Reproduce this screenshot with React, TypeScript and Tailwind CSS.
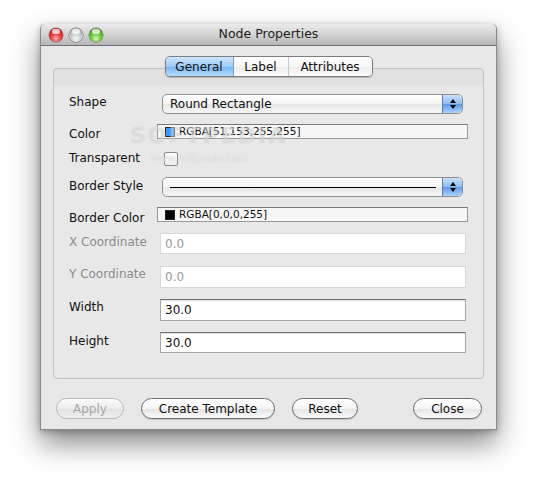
import React from "react";

const FONT = { fontFamily: '"DejaVu Sans", "Noto Sans", sans-serif' };

function Light({ tone }: { tone: "red" | "gray" | "green" }) {
  const bg =
    tone === "red"
      ? "bg-[radial-gradient(circle_at_50%_75%,#ffb0b0_0%,#e8383a_40%,#a8100f_100%)]"
      : tone === "green"
        ? "bg-[radial-gradient(circle_at_50%_75%,#d6fba8_0%,#6cc93a_40%,#2f7a10_100%)]"
        : "bg-[radial-gradient(circle_at_50%_75%,#f4f4f4_0%,#cacaca_45%,#8f8f8f_100%)]";
  return (
    <span className={`relative h-[14px] w-[14px] rounded-full ${bg} shadow-[0_0_0_0.5px_rgba(0,0,0,0.5)]`}>
      <span className="absolute left-[3px] top-[1px] h-[5px] w-[8px] rounded-full bg-white/75" />
    </span>
  );
}

function Stepper() {
  return (
    <span className="flex h-full w-[20px] flex-col items-center justify-center gap-[2px] rounded-r-[5px] border-l border-[#5a7fb8] bg-[linear-gradient(#c9e1fb,#8bbcf2_50%,#5b9ae6_51%,#a8d4fb)]">
      <span className="h-0 w-0 border-x-[3px] border-b-[4px] border-x-transparent border-b-black" />
      <span className="h-0 w-0 border-x-[3px] border-t-[4px] border-x-transparent border-t-black" />
    </span>
  );
}

function Combo({ children }: { children: React.ReactNode }) {
  return (
    <div className="ml-[5px] flex h-[20px] w-[301px] overflow-hidden rounded-[5px] border border-[#8f8f8f] bg-[linear-gradient(#ffffff,#f4f4f4_50%,#e6e6e6_51%,#f6f6f6)]">
      <div className="flex flex-1 items-center pl-[7px] text-[12px] text-[#111]">{children}</div>
      <Stepper />
    </div>
  );
}

function ColorField({ swatch, value }: { swatch: string; value: string }) {
  return (
    <div className="flex h-[15px] w-[311px] items-center border border-[#9a9a9a] border-t-[#777] bg-[#f7f7f7] pl-[7px]">
      <span className={`mr-[4px] h-[10px] w-[10px] border border-[#222] ${swatch}`} />
      <span className="text-[10.5px] leading-none text-[#111]">{value}</span>
    </div>
  );
}

function TextField({ value, h, disabled }: { value: string; h: string; disabled?: boolean }) {
  return (
    <div
      className={`ml-[3px] flex ${h} w-[306px] items-center bg-white pl-[4px] text-[12px] ${
        disabled
          ? "border border-[#d9d9d9] text-[#9a9a9a]"
          : "border border-[#a6a6a6] border-t-[#6e6e6e] text-[#111] shadow-[inset_0_1px_1px_rgba(0,0,0,0.12)]"
      }`}
    >
      {value}
    </div>
  );
}

function Row({
  label,
  gap,
  shift,
  disabled,
  children,
}: {
  label: string;
  gap: string;
  shift: string;
  disabled?: boolean;
  children: React.ReactNode;
}) {
  return (
    <div className={`flex items-center pl-[15px] ${gap}`}>
      <span
        className={`h-[14px] w-[88px] text-[12px] leading-[14px] ${shift} ${disabled ? "text-[#8c8c8c]" : "text-[#111]"}`}
      >
        {label}
      </span>
      {children}
    </div>
  );
}

function Pill({
  children,
  width,
  disabled,
  className = "",
}: {
  children: React.ReactNode;
  width: string;
  disabled?: boolean;
  className?: string;
}) {
  return (
    <button
      className={`flex h-[21px] ${width} items-center justify-center rounded-full text-[12px] ${className} ${
        disabled
          ? "border border-[#b9b9b9] bg-[linear-gradient(#fbfbfb,#ececec_50%,#e2e2e2_51%,#f0f0f0)] text-[#a9a9a9]"
          : "border border-[#6f6f6f] bg-[linear-gradient(#ffffff,#f5f5f5_50%,#e4e4e4_51%,#fafafa)] text-[#111] shadow-[0_1px_1px_rgba(0,0,0,0.15)]"
      }`}
    >
      {children}
    </button>
  );
}

export default function App() {
  return (
    <div className="h-[485px] w-[537px] overflow-hidden bg-white pl-[40px] pt-[24px]" style={FONT}>
      <div className="relative flex h-[406px] w-[457px] flex-col rounded-t-[5px] border-x border-b border-[#8a8a8a] bg-[#e8e8e8] shadow-[0_14px_28px_rgba(0,0,0,0.45),0_2px_6px_rgba(0,0,0,0.25)]">
        {/* title bar */}
        <div className="relative flex h-[22px] items-center rounded-t-[5px] border-b border-[#6f6f6f] bg-[linear-gradient(#ebebeb,#d3d3d3_50%,#b6b6b6)] px-[8px]">
          <div className="flex items-center gap-[6px]">
            <Light tone="red" />
            <Light tone="gray" />
            <Light tone="green" />
          </div>
          <span className="absolute inset-x-0 text-center text-[12.5px] text-[#1e1e1e]">Node Properties</span>
        </div>

        {/* tabs */}
        <div className="relative z-10 mt-[10px] flex justify-center">
          <div className="flex h-[21px] overflow-hidden rounded-[5px] border border-[#7d7d7d] text-[12px] text-[#111] shadow-[0_1px_1px_rgba(0,0,0,0.2)]">
            <span className="flex w-[68px] items-center justify-center border-r border-[#7f9cc6] bg-[linear-gradient(#cfe6fd,#9ccbf7_50%,#75b4f2_51%,#b4dcfc)]">
              General
            </span>
            <span className="flex w-[55px] items-center justify-center border-r border-[#c8c8c8] bg-[linear-gradient(#ffffff,#f6f6f6_50%,#ececec_51%,#fbfbfb)]">
              Label
            </span>
            <span className="flex w-[83px] items-center justify-center bg-[linear-gradient(#ffffff,#f6f6f6_50%,#ececec_51%,#fbfbfb)]">
              Attributes
            </span>
          </div>
        </div>

        {/* panel */}
        <div className="relative mx-[12px] -mt-[9px] h-[311px] rounded-[4px] border border-[#c2c2c2] bg-[linear-gradient(#e1e1e1_0,#e1e1e1_16px,#e8e8e8_17px)]">
          <div className="flex flex-col pt-[25px]">
            <Row label="Shape" gap="" shift="-translate-y-[2px]">
              <Combo>Round Rectangle</Combo>
            </Row>
            <Row label="Color" gap="mt-[10px]" shift="translate-y-[2px]">
              <ColorField swatch="bg-[#3399ff]" value="RGBA[51,153,255,255]" />
            </Row>
            <Row label="Transparent" gap="mt-[13px]" shift="-translate-y-[1px]">
              <span className="ml-[7px] h-[14px] w-[14px] rounded-[2px] border border-[#8a8a8a] bg-[linear-gradient(#ffffff,#eeeeee)]" />
            </Row>
            <Row label="Border Style" gap="mt-[11px]" shift="-translate-y-[1px]">
              <Combo>
                <span className="mr-[6px] block h-px flex-1 bg-black" />
              </Combo>
            </Row>
            <Row label="Border Color" gap="mt-[10px]" shift="translate-y-[3px]">
              <ColorField swatch="bg-black" value="RGBA[0,0,0,255]" />
            </Row>
            <Row label="X Coordinate" gap="mt-[11px]" shift="-translate-y-[2px]" disabled>
              <TextField value="0.0" h="h-[21px]" disabled />
            </Row>
            <Row label="Y Coordinate" gap="mt-[12px]" shift="-translate-y-[3px]" disabled>
              <TextField value="0.0" h="h-[22px]" disabled />
            </Row>
            <Row label="Width" gap="mt-[11px]" shift="-translate-y-[3px]">
              <TextField value="30.0" h="h-[22px]" />
            </Row>
            <Row label="Height" gap="mt-[11px]" shift="-translate-y-[2px]">
              <TextField value="30.0" h="h-[21px]" />
            </Row>
          </div>

          {/* watermark */}
          <div className="pointer-events-none absolute left-[76px] top-[50px] text-[22px] font-bold tracking-[2px] text-white/40 [text-shadow:0_0_1px_rgba(120,120,120,0.3)]">
            SOFTPEDIA
          </div>
          <div className="pointer-events-none absolute left-[97px] top-[82px] text-[10px] text-white/70 [text-shadow:0_0_1px_rgba(120,120,120,0.4)]">
            www.softpedia.com
          </div>
        </div>

        {/* buttons */}
        <div className="mt-[19px] flex items-center gap-[17px] pl-[15px] pr-[14px]">
          <Pill width="w-[68px]" disabled>
            Apply
          </Pill>
          <Pill width="w-[134px]">Create Template</Pill>
          <Pill width="w-[66px]">Reset</Pill>
          <Pill width="w-[69px]" className="ml-auto">
            Close
          </Pill>
        </div>
      </div>
    </div>
  );
}
